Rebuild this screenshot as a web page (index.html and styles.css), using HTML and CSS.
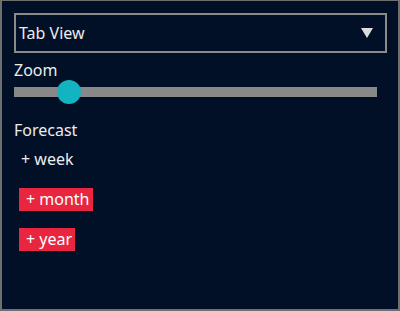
FILE: index.html
```html
<!DOCTYPE html>
<html lang="en">
<head>
<meta charset="UTF-8">
<title>Forecast Panel</title>
<link rel="stylesheet" href="styles.css">
</head>
<body>
  <div class="panel">
    <div class="dropdown">
      <span class="dropdown-text">Tab View</span>
      <span class="dropdown-arrow"></span>
    </div>

    <div class="label zoom-label">Zoom</div>
    <div class="slider">
      <div class="slider-track"></div>
      <div class="slider-thumb"></div>
    </div>

    <div class="label forecast-label">Forecast</div>
    <div class="option">+ week</div>
    <div class="option active">+ month</div>
    <div class="option active">+ year</div>
  </div>
</body>
</html>
```
FILE: styles.css
```css
body {
  margin: 0;
  padding: 0;
  background-color: #021027;
  font-family: "Noto Sans", "Open Sans", sans-serif;
  color: #ececec;
}

.panel {
  width: 400px;
  height: 311px;
  box-sizing: border-box;
  border: 2px solid #6f6f6f;
  border-top-width: 1px;
  background-color: #021027;
  padding: 12px 11px 0 12px;
  display: flex;
  flex-direction: column;
  align-items: flex-start;
}

.dropdown {
  align-self: stretch;
  height: 40px;
  box-sizing: border-box;
  border: 2px solid #8a8a8a;
  display: flex;
  align-items: center;
  justify-content: space-between;
  padding: 0 12px 0 3px;
}

.dropdown-text {
  font-size: 16px;
}

.dropdown-arrow {
  width: 0;
  height: 0;
  border-left: 6px solid transparent;
  border-right: 6px solid transparent;
  border-top: 10px solid #dcdcdc;
}

.label {
  font-size: 16px;
  line-height: 20px;
}

.zoom-label {
  margin-top: 7px;
}

.slider {
  position: relative;
  align-self: stretch;
  height: 24px;
  margin-right: 10px;
  display: flex;
  align-items: center;
}

.slider-track {
  width: 100%;
  height: 10px;
  background-color: #888888;
}

.slider-thumb {
  position: absolute;
  left: 43px;
  top: 0;
  width: 24px;
  height: 24px;
  border-radius: 50%;
  background-color: #14b3c2;
}

.forecast-label {
  margin-top: 16px;
}

.option {
  font-size: 16px;
  line-height: 23px;
  padding: 0 2px 0 2px;
  margin-left: 5px;
  margin-top: 17px;
}

.forecast-label + .option {
  margin-top: 8px;
}

.option.active {
  padding: 0 3px 0 7px;
  background-color: #e8263f;
  color: #ffffff;
}
```
